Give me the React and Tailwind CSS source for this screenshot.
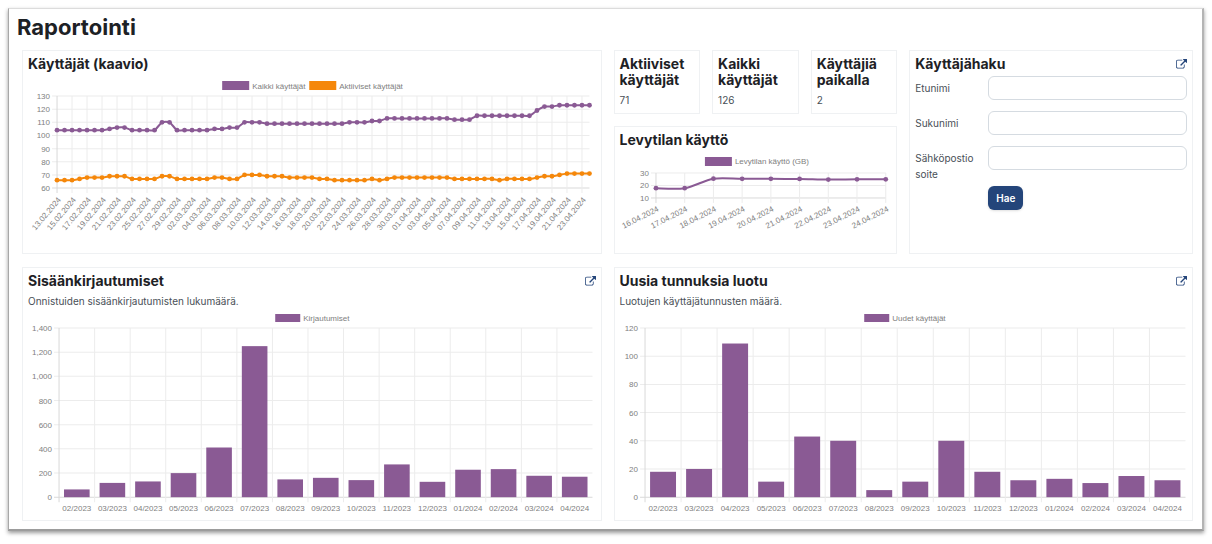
const PURPLE = '#8a5a94'
const ORANGE = '#f5870a'
const GRID = '#ececec'
const AXIS = '#d9d9d9'
const TICK = '#808080'

// [value, how many days in a row]
const expand = (runs) => runs.flatMap(([value, days]) => Array(days).fill(value))

const allUsers = expand([
  [104, 7], [105, 1], [106, 2], [104, 4], [110, 2], [104, 5], [105, 2], [106, 2], [110, 3],
  [109, 11], [110, 3], [111, 2], [113, 9], [112, 3], [115, 8], [119, 1], [122, 2], [123, 5],
])

const activeUsers = expand([
  [66, 3], [67, 1], [68, 3], [69, 3], [67, 4], [69, 2], [67, 5], [68, 2], [67, 2], [70, 3],
  [69, 3], [68, 4], [67, 2], [66, 5], [67, 1], [66, 1], [67, 1], [68, 8], [67, 6], [66, 1],
  [67, 4], [68, 1], [69, 2], [70, 1], [71, 4],
])

const formatDate = (d) =>
  [String(d.getUTCDate()).padStart(2, '0'), String(d.getUTCMonth() + 1).padStart(2, '0'), d.getUTCFullYear()].join('.')

const userDates = allUsers.map((_, i) => formatDate(new Date(Date.UTC(2024, 1, 13 + i))))

const disk = [17.8, 17.8, 25.4, 25.3, 25.3, 25.2, 24.7, 24.9, 24.9]
const diskDates = disk.map((_, i) => formatDate(new Date(Date.UTC(2024, 3, 16 + i))))

const months = [
  '02/2023', '03/2023', '04/2023', '05/2023', '06/2023', '07/2023', '08/2023', '09/2023',
  '10/2023', '11/2023', '12/2023', '01/2024', '02/2024', '03/2024', '04/2024',
]
const logins = [64, 118, 130, 199, 411, 1250, 147, 160, 141, 271, 127, 227, 232, 177, 169]
const newAccounts = [18, 20, 109, 11, 43, 40, 5, 11, 40, 18, 12, 13, 10, 15, 12]

function smoothPath(points, tension) {
  return points.reduce((d, [x, y], i) => {
    if (i === 0) return `M${x} ${y}`
    const [px, py] = points[i - 1]
    const before = points[i - 2] || points[i - 1]
    const after = points[i + 1] || points[i]
    const c1 = [px + (x - before[0]) * tension, py + (y - before[1]) * tension]
    const c2 = [x - (after[0] - px) * tension, y - (after[1] - py) * tension]
    return `${d} C${c1[0]} ${c1[1]} ${c2[0]} ${c2[1]} ${x} ${y}`
  }, '')
}

function Legend({ items, y, boxWidth, boxHeight }) {
  return items.map((item) => (
    <g key={item.label}>
      <rect x={item.x} y={y} width={boxWidth} height={boxHeight} fill={item.color} />
      <text x={item.x + boxWidth + 3} y={y + boxHeight / 2 + 3} fill={TICK}>{item.label}</text>
    </g>
  ))
}

function YAxis({ ticks, plot, toY }) {
  return ticks.map((t, i) => (
    <g key={t}>
      <line x1={plot.left - 5} x2={plot.right} y1={toY(t)} y2={toY(t)} stroke={i === 0 ? AXIS : GRID} />
      <text x={plot.left - 7} y={toY(t) + 3} textAnchor="end" fill={TICK}>{t.toLocaleString('en-US')}</text>
    </g>
  ))
}

function LineChart({ label, width, height, plot, ticks, dates, every, angle, tension, radius, series, legendY }) {
  const min = ticks[0]
  const max = ticks[ticks.length - 1]
  const toX = (i) => plot.left + (i * (plot.right - plot.left)) / (dates.length - 1)
  const toY = (v) => plot.bottom - ((v - min) * (plot.bottom - plot.top)) / (max - min)

  return (
    <svg viewBox={`0 0 ${width} ${height}`} role="img" aria-label={label} className="block h-auto w-full font-['Liberation_Sans',sans-serif] text-[8px]" fill="currentColor">
      <Legend items={series} y={legendY} boxWidth={27} boxHeight={9} />
      <YAxis ticks={ticks} plot={plot} toY={toY} />
      {dates.map((date, i) => i % every === 0 && (
        <g key={date}>
          <line x1={toX(i)} x2={toX(i)} y1={plot.top} y2={plot.bottom + 5} stroke={i === 0 ? AXIS : GRID} />
          <text transform={`translate(${toX(i) + 2} ${plot.bottom + 10}) rotate(${-angle})`} y="3" textAnchor="end" fill={TICK}>{date}</text>
        </g>
      ))}
      {series.map((s) => {
        const points = s.data.map((v, i) => [toX(i), toY(v)])
        return (
          <g key={s.label} fill={s.color}>
            <path d={smoothPath(points, tension)} fill="none" stroke={s.color} strokeWidth="2" />
            {points.map(([x, y]) => <circle key={x} cx={x} cy={y} r={radius} />)}
          </g>
        )
      })}
    </svg>
  )
}

function BarChart({ label, name, legendX, plot, ticks, data }) {
  const max = ticks[ticks.length - 1]
  const step = (plot.right - plot.left) / data.length
  const toY = (v) => plot.bottom - (v * (plot.bottom - plot.top)) / max

  return (
    <svg viewBox="0 0 567 206" role="img" aria-label={label} className="block h-auto w-full font-['Liberation_Sans',sans-serif] text-[8px]" fill="currentColor">
      <Legend items={[{ label: name, x: legendX, color: PURPLE }]} y={5} boxWidth={25} boxHeight={8} />
      <YAxis ticks={ticks} plot={plot} toY={toY} />
      {data.map((value, i) => {
        const x = plot.left + i * step
        return (
          <g key={months[i]}>
            <line x1={x} x2={x} y1={plot.top} y2={plot.bottom + 5} stroke={i === 0 ? AXIS : GRID} />
            <rect x={x + step * 0.14} y={toY(value)} width={step * 0.72} height={plot.bottom - toY(value)} fill={PURPLE} />
            <text x={x + step / 2} y={plot.bottom + 14} textAnchor="middle" fill={TICK}>{months[i]}</text>
          </g>
        )
      })}
    </svg>
  )
}

function ExternalLink({ label }) {
  return (
    <a href="#" aria-label={label} className="shrink-0 text-[#24457a]">
      <svg viewBox="0 0 1792 1792" className="size-[11px]" fill="currentColor">
        <path d="M1408 928v320q0 119-84.5 203.5t-203.5 84.5h-832q-119 0-203.5-84.5t-84.5-203.5v-832q0-119 84.5-203.5t203.5-84.5h704q14 0 23 9t9 23v64q0 14-9 23t-23 9h-704q-66 0-113 47t-47 113v832q0 66 47 113t113 47h832q66 0 113-47t47-113v-320q0-14 9-23t23-9h64q14 0 23 9t9 23zm384-864v512q0 26-19 45t-45 19-45-19l-176-176-652 652q-10 10-23 10t-23-10l-114-114q-10-10-10-23t10-23l652-652-176-176q-19-19-19-45t19-45 45-19h512q26 0 45 19t19 45z" />
      </svg>
    </a>
  )
}

function Card({ title, link, children }) {
  return (
    <section className="border border-[#eff1f3] p-[5px]">
      <div className="mb-1 flex items-center justify-between">
        <h2 className="text-sm leading-4 font-bold text-[#1d2125]">{title}</h2>
        {link && <ExternalLink label={link} />}
      </div>
      {children}
    </section>
  )
}

function Field({ id, label }) {
  return (
    <div className="grid min-h-[31px] grid-cols-[61px_minmax(0,1fr)] items-start gap-x-3">
      <label htmlFor={id} className="pt-1 break-all">{label}</label>
      <input id={id} type="text" className="h-6 w-full rounded-md border border-[#d5dbe1] bg-white px-2 outline-none focus:border-[#24457a]" />
    </div>
  )
}

export default function App() {
  return (
    <div className="bg-white p-2 pb-3 font-[Inter,sans-serif] text-[10px] leading-4 text-[#495057]">
      <main className="border border-r-2 border-b-2 border-t-[#dcdcdc] border-r-[#b4b4b4] border-b-[#9c9c9c] border-l-[#a8a8a8] pt-1 pr-[9px] pb-2 pl-[13px] shadow-[0px_2px_4px_rgba(0,0,0,0.4)]">
        <h1 className="-ml-[5px] pb-[9px] text-[22px] leading-7 font-bold text-[#1d2125]">Raportointi</h1>

        <div className="grid grid-cols-2 gap-x-3 gap-y-[13px]">
          <Card title="Käyttäjät (kaavio)">
            <LineChart
              label="Käyttäjät"
              width={567}
              height={172}
              plot={{ left: 29, right: 561, top: 20, bottom: 112 }}
              ticks={[60, 70, 80, 90, 100, 110, 120, 130]}
              dates={userDates}
              every={2}
              angle={50}
              tension={0.1}
              radius={2.4}
              legendY={5}
              series={[
                { label: 'Kaikki käyttäjät', color: PURPLE, data: allUsers, x: 194 },
                { label: 'Aktiiviset käyttäjät', color: ORANGE, data: activeUsers, x: 281 },
              ]}
            />
          </Card>

          <div className="grid grid-cols-2 gap-3">
            <div className="flex flex-col gap-3">
              <div className="grid grid-cols-3 gap-3">
                <Card title="Aktiiviset käyttäjät"><p>71</p></Card>
                <Card title="Kaikki käyttäjät"><p>126</p></Card>
                <Card title="Käyttäjiä paikalla"><p>2</p></Card>
              </div>
              <Card title="Levytilan käyttö">
                <LineChart
                  label="Levytilan käyttö"
                  width={272}
                  height={96}
                  plot={{ left: 36, right: 266, top: 21, bottom: 46 }}
                  ticks={[10, 20, 30]}
                  dates={diskDates}
                  every={1}
                  angle={27}
                  tension={0.15}
                  radius={2.4}
                  legendY={5}
                  series={[{ label: 'Levytilan käyttö (GB)', color: PURPLE, data: disk, x: 85 }]}
                />
              </Card>
            </div>

            <Card title="Käyttäjähaku" link="Avaa käyttäjähaku">
              <form className="flex flex-col gap-1" onSubmit={(e) => e.preventDefault()}>
                <Field id="firstname" label="Etunimi" />
                <Field id="lastname" label="Sukunimi" />
                <Field id="email" label="Sähköpostiosoite" />
                <div className="pl-[73px]">
                  <button type="submit" className="h-6 rounded-md bg-[#24457a] px-2 font-semibold text-white shadow-sm">Hae</button>
                </div>
              </form>
            </Card>
          </div>

          <Card title="Sisäänkirjautumiset" link="Avaa sisäänkirjautumiset">
            <p>Onnistuiden sisäänkirjautumisten lukumäärä.</p>
            <BarChart
              label="Sisäänkirjautumiset"
              name="Kirjautumiset"
              legendX={247}
              plot={{ left: 31, right: 564, top: 19, bottom: 188 }}
              ticks={[0, 200, 400, 600, 800, 1000, 1200, 1400]}
              data={logins}
            />
          </Card>

          <Card title="Uusia tunnuksia luotu" link="Avaa uudet tunnukset">
            <p>Luotujen käyttäjätunnusten määrä.</p>
            <BarChart
              label="Uusia tunnuksia luotu"
              name="Uudet käyttäjät"
              legendX={244}
              plot={{ left: 25, right: 565, top: 19, bottom: 188 }}
              ticks={[0, 20, 40, 60, 80, 100, 120]}
              data={newAccounts}
            />
          </Card>
        </div>
      </main>
    </div>
  )
}
